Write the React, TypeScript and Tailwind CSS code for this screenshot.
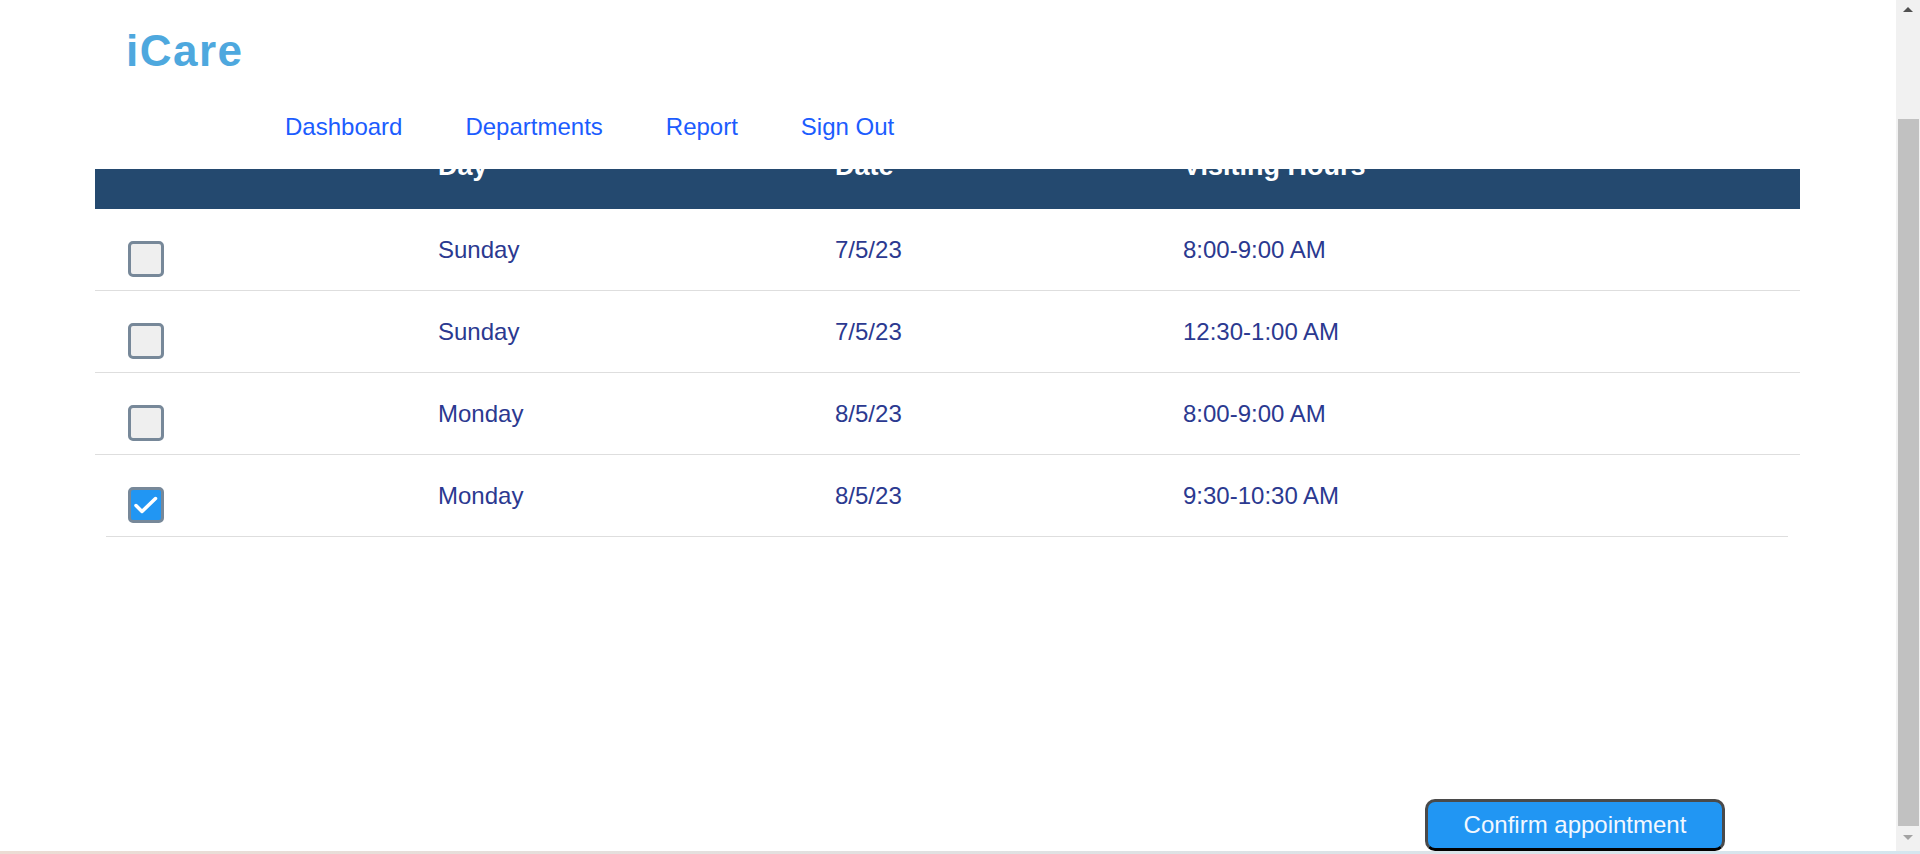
import React from 'react';

const slots = [
    { day: 'Sunday', date: '7/5/23', hours: '8:00-9:00 AM', checked: false },
    { day: 'Sunday', date: '7/5/23', hours: '12:30-1:00 AM', checked: false },
    { day: 'Monday', date: '8/5/23', hours: '8:00-9:00 AM', checked: false },
    { day: 'Monday', date: '8/5/23', hours: '9:30-10:30 AM', checked: true },
];

const cols = 'grid grid-cols-[343px_397px_348px_1fr]';

function Box({ checked }: { checked: boolean }) {
    return (
        <div
            className={`w-[36px] h-[36px] rounded-[5px] border-[3px] border-[#778899] ${
                checked ? 'bg-[#2196f3]' : 'bg-[#efefef]'
            }`}
        >
            {checked && (
                <svg width="30" height="30" viewBox="0 0 30 30">
                    <polyline
                        points="5,15.5 11,21.5 24.5,8.5"
                        fill="none"
                        stroke="white"
                        strokeWidth="3.5"
                        strokeLinecap="round"
                        strokeLinejoin="round"
                    />
                </svg>
            )}
        </div>
    );
}

function Scrollbar() {
    return (
        <div className="w-[24px] bg-[#f1f1f1] flex flex-col items-center">
            {/* up arrow */}
            <div className="h-[119px] w-full flex justify-center pt-[7px]">
                <div className="w-0 h-0 border-l-[5px] border-r-[5px] border-b-[5px] border-l-transparent border-r-transparent border-b-[#505050]"></div>
            </div>
            {/* thumb */}
            <div className="w-[21px] h-[707px] bg-[#c1c1c1]"></div>
            <div className="flex-1 w-full flex justify-center pt-[9px]">
                <div className="w-0 h-0 border-l-[5px] border-r-[5px] border-t-[5px] border-l-transparent border-r-transparent border-t-[#a3a3a3]"></div>
            </div>
        </div>
    );
}

export default function App() {
    return (
        <div className="w-[1920px] h-[854px] overflow-hidden bg-white flex flex-col font-['Liberation_Sans',Arial,sans-serif]">
            <div className="flex flex-1 min-h-0">
                <div className="flex-1 flex flex-col">
                    {/* Header */}
                    <header className="h-[169px]">
                        <div className="pt-[29px] pl-[126px] text-[44px] leading-[44px] font-bold tracking-[1.5px] text-[#4ea8de]">
                            iCare
                        </div>
                        <nav className="mt-[42px] pl-[285px] flex gap-[63px] text-[24px] leading-[24px] text-[#1c5cfe]">
                            <a>Dashboard</a>
                            <a>Departments</a>
                            <a>Report</a>
                            <a>Sign Out</a>
                        </nav>
                    </header>

                    {/* Table */}
                    <div className="ml-[95px] w-[1705px]">
                        <div className={`${cols} h-[40px] overflow-hidden bg-[#24496f] text-white font-bold text-[27px] leading-[27px]`}>
                            <div></div>
                            <div className="-mt-[16px]">Day</div>
                            <div className="-mt-[16px]">Date</div>
                            <div className="-mt-[16px]">Visiting Hours</div>
                        </div>
                        {slots.map((s, i) => (
                            <div
                                key={i}
                                className={`${cols} h-[82px] ${i < slots.length - 1 ? 'border-b border-[#dedede]' : ''} text-[24px] leading-[24px] text-[#2b3990]`}
                            >
                                <div className="pl-[33px] pt-[32px]">
                                    <Box checked={s.checked} />
                                </div>
                                <div className="pt-[29px]">{s.day}</div>
                                <div className="pt-[29px]">{s.date}</div>
                                <div className="pt-[29px]">{s.hours}</div>
                            </div>
                        ))}
                        <div className="-mt-[1px] ml-[11px] mr-[12px] border-b border-[#dedede]"></div>
                    </div>

                    <div className="flex-1"></div>

                    {/* Confirm */}
                    <div className="flex justify-end pr-[171px]">
                        <button className="w-[300px] h-[52px] rounded-[10px] border-[3px] border-[#4a4a4a] border-b-black bg-[#2196f3] text-[24px] leading-[24px] text-[#f2f8ff]">
                            Confirm appointment
                        </button>
                    </div>
                </div>
                <Scrollbar />
            </div>
            <div className="h-[3px] bg-gradient-to-r from-[#ecdcd4] to-[#d5e6ef]"></div>
        </div>
    );
}
